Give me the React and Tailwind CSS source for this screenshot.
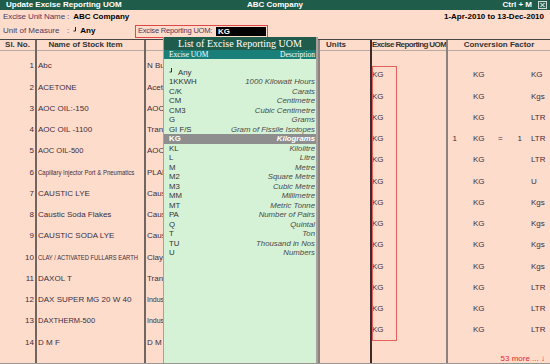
import React from "react";

const names = [
  ["1", "Abc", "N Bu"],
  ["2", "ACETONE", "Acet"],
  ["3", "AOC OIL:-150", "AOC"],
  ["4", "AOC OIL -1100", "Tran"],
  ["5", "AOC OIL-500", "AOC"],
  ["6", "Capillary Injector Port & Pneumatics", "PLAN"],
  ["7", "CAUSTIC LYE", "Caus"],
  ["8", "Caustic Soda Flakes", "Caus"],
  ["9", "CAUSTIC SODA LYE", "Caus"],
  ["10", "CLAY / ACTIVATED FULLARS EARTH", "Clay"],
  ["11", "DAXOL T", "Tran"],
  ["12", "DAX SUPER MG 20 W 40", "Indus"],
  ["13", "DAXTHERM-500", "Indus"],
  ["14", "D M F", "D M"],
];

const conv = [
  ["", "KG", "", "", "KG"],
  ["", "KG", "", "", "Kgs"],
  ["", "KG", "", "", "LTR"],
  ["1", "KG", "=", "1", "LTR"],
  ["", "KG", "", "", "LTR"],
  ["", "KG", "", "", "U"],
  ["", "KG", "", "", "Kgs"],
  ["", "KG", "", "", "Kgs"],
  ["", "KG", "", "", "Kgs"],
  ["", "KG", "", "", "Kgs"],
  ["", "KG", "", "", "LTR"],
  ["", "KG", "", "", "LTR"],
  ["", "KG", "", "", "LTR"],
];

const uoms = [
  ["1KKWH", "1000 Kilowatt Hours"],
  ["C/K", "Carats"],
  ["CM", "Centimetre"],
  ["CM3", "Cubic Centimetre"],
  ["G", "Grams"],
  ["GI F/S", "Gram of Fissile Isotopes"],
  ["KG", "Kilograms"],
  ["KL", "Kilolitre"],
  ["L", "Litre"],
  ["M", "Metre"],
  ["M2", "Square Metre"],
  ["M3", "Cubic Metre"],
  ["MM", "Millimetre"],
  ["MT", "Metric Tonne"],
  ["PA", "Number of Pairs"],
  ["Q", "Quintal"],
  ["T", "Ton"],
  ["TU", "Thousand in Nos"],
  ["U", "Numbers"],
];

function Hook({ color = "#222" }) {
  return (
    <svg width="4" height="5" viewBox="0 0 4 5" className="block">
      <path d="M2.5 0 V4 H0.5" stroke={color} strokeWidth="1" fill="none" />
    </svg>
  );
}

function NameText({ t }) {
  if (t === "Capillary Injector Port & Pneumatics")
    return <span className="inline-block origin-left scale-x-[0.86] text-[7px]">{t}</span>;
  if (t === "CLAY / ACTIVATED FULLARS EARTH")
    return <span className="inline-block origin-left scale-x-[0.83] text-[7px]">{t}</span>;
  if (t === "DAXTHERM-500" || t === "AOC OIL-500")
    return <span className="text-[7.5px]">{t}</span>;
  return t;
}

export default function App() {
  return (
    <div className="w-[550px] h-[364px] relative overflow-hidden bg-[#fedccb] font-['Liberation_Sans',Arial,sans-serif] text-[8px] text-[#3b2f3f] flex flex-col">
      {/* Title bar */}
      <div className="h-[10px] shrink-0 bg-[#1f5d4a] text-white font-bold text-[8px] leading-[10px] grid grid-cols-[1fr_auto_1fr] px-[6px]">
        <div className="whitespace-nowrap">Update Excise Reporting UOM</div>
        <div className="text-center whitespace-nowrap">ABC Company</div>
        <div className="flex justify-end items-center gap-[6px]">
          <span className="whitespace-nowrap">Ctrl + M</span>
          <svg width="9" height="8" viewBox="0 0 9 8" className="-mr-[3px]">
            <rect x="0.5" y="0.5" width="8" height="7" fill="#2d6a57" stroke="#cfd8d3" strokeWidth="1" />
            <path d="M2.5 2 L6.5 6 M6.5 2 L2.5 6" stroke="#ffffff" strokeWidth="1" />
          </svg>
        </div>
      </div>

      {/* Info lines */}
      <div className="h-[13px] shrink-0 flex items-center justify-between pl-[3px] pr-[6px] whitespace-nowrap">
        <div className="flex items-center">
          <span className="w-[64px] shrink-0 text-[#4d3a5e] tracking-[-0.1px]">Excise Unit Name</span>
          <span className="text-[#4d3a5e]">:</span>
          <span className="ml-[4px] font-bold text-black">ABC Company</span>
        </div>
        <div className="font-bold text-black">1-Apr-2010 to 13-Dec-2010</div>
      </div>
      <div className="h-[16px] shrink-0 flex items-center pl-[3px] whitespace-nowrap">
        <div className="w-[132px] shrink-0 flex items-center">
          <span className="w-[64px] shrink-0 text-[#4d3a5e]">Unit of Measure</span>
          <span className="text-[#4d3a5e]">:</span>
          <span className="ml-[4px] relative -top-[2px]"><Hook /></span>
          <span className="ml-[3px] font-bold text-black">Any</span>
        </div>
        <div className="w-[133px] shrink-0 h-[13px] border border-[#e04848] p-[1px] flex items-center">
          <span className="pl-[1px] flex-1 text-[#4d3a5e] text-[7.5px] tracking-[-0.2px] overflow-hidden">Excise Reporting UOM:</span>
          <span className="w-[50px] h-full bg-black text-white font-bold pl-[2px] leading-[9px]">KG</span>
        </div>
      </div>

      {/* Table */}
      <div className="flex-1 border-t border-[#4a4545] border-b border-b-[#9a9490] flex">
        {/* Sl No */}
        <div className="w-[35px] flex flex-col">
          <div className="h-[11px] leading-[10px] font-bold text-[#333] text-center border-b border-[#b8aaa2]">Sl. No.</div>
          <div className="pt-[4.4px]">
            {names.map((r) => (
              <div key={r[0]} className="h-[21.25px] leading-[21.25px] text-right pr-[1px]">{r[0]}</div>
            ))}
          </div>
        </div>
        <div className="w-[2px] bg-[#6f6662]" />
        {/* Name */}
        <div className="w-[107px] flex flex-col overflow-hidden">
          <div className="h-[11px] leading-[10px] font-bold text-[#333] text-center pr-[10px] border-b border-[#b8aaa2] whitespace-nowrap">Name of Stock Item</div>
          <div className="pt-[4.4px]">
            {names.map((r) => (
              <div key={r[0]} className="h-[21.25px] leading-[21.25px] pl-[1px] whitespace-nowrap">
                <NameText t={r[1]} />
              </div>
            ))}
          </div>
        </div>
        <div className="w-[2px] bg-[#6f6662]" />
        {/* Group (mostly hidden under the list) */}
        <div className="w-[172px] flex flex-col">
          <div className="h-[11px] border-b border-[#b8aaa2]" />
          <div className="pt-[4.4px]">
            {names.map((r) => (
              <div
                key={r[0]}
                className={
                  r[2] === "Indus"
                    ? "h-[21.25px] leading-[21.25px] pl-[1px] whitespace-nowrap text-[7px]"
                    : "h-[21.25px] leading-[21.25px] pl-[1px] whitespace-nowrap"
                }
              >
                {r[2]}
              </div>
            ))}
          </div>
        </div>
        <div className="w-[2px] bg-[#8a827e]" />
        {/* Units */}
        <div className="w-[50px] flex flex-col">
          <div className="h-[11px] leading-[10px] font-bold text-[#333] pl-[6px] border-b border-[#b8aaa2]">Units</div>
        </div>
        <div className="w-[2px] bg-[#3e2a2a]" />
        {/* Excise Reporting UOM */}
        <div className="w-[74px] flex flex-col">
          <div className="h-[11px] leading-[10px] font-bold text-[#333] text-center tracking-[-0.6px] whitespace-nowrap border-b border-[#b8aaa2]">Excise Reporting UOM</div>
          <div className="pt-[13.4px]">
            {conv.map((r, i) => (
              <div key={i} className="h-[21.25px] leading-[21.25px]">KG</div>
            ))}
          </div>
        </div>
        <div className="w-[2px] bg-[#8a827e]" />
        {/* Conversion factor */}
        <div className="flex-1 flex flex-col">
          <div className="h-[11px] leading-[10px] font-bold text-[#333] text-center border-b border-[#b8aaa2] whitespace-nowrap">Conversion Factor</div>
          <div className="pt-[13.4px]">
            {conv.map((r, i) => (
              <div key={i} className="h-[21.25px] leading-[21.25px] flex whitespace-nowrap">
                <span className="w-[9px] text-right">{r[0]}</span>
                <span className="ml-[16px] w-[25px]">{r[1]}</span>
                <span className="w-[8px]">{r[2]}</span>
                <span className="w-[16px] text-right">{r[3]}</span>
                <span className="ml-[9px]">{r[4]}</span>
              </div>
            ))}
          </div>
          <div className="flex-1 flex items-end justify-end pr-[5px]">
            <span className="text-[#e8262a] leading-[9px] whitespace-nowrap">53 more ... ↓</span>
          </div>
        </div>
      </div>

      {/* Red selection box over the Excise Reporting UOM column */}
      <div className="absolute left-[372px] top-[66px] w-[25px] h-[275px] border border-[#e8605c] pointer-events-none" />

      {/* Popup list */}
      <div className="absolute left-[163px] top-[37px] w-[155px] h-[326px] bg-[#d5f2d6] border-l border-[#9aa89a] border-r-[2px] border-r-[#a8a29e] flex flex-col">
        <div className="h-[13px] bg-[#1f5c4c] text-white text-center font-['Liberation_Serif','Times_New_Roman',serif] text-[10px] leading-[13px] whitespace-nowrap">
          List of Excise Reporting UOM
        </div>
        <div className="h-[9px] bg-[#1a7f79] text-white flex justify-between items-center pl-[5px] pr-[1px] font-['Liberation_Serif','Times_New_Roman',serif] text-[7.5px] leading-[9px]">
          <span>Excise UOM</span>
          <span>Description</span>
        </div>
        <div className="pt-[8.5px] text-[#333] text-[7.8px]">
          <div className="h-[9.5px] leading-[9.5px] flex items-center pl-[5px]">
            <span className="relative -top-[2px]"><Hook color="#333" /></span>
            <span className="ml-[5px]">Any</span>
          </div>
          {uoms.map(([c, d]) => {
            const sel = c === "KG";
            return (
              <div
                key={c}
                className={
                  sel
                    ? "h-[9.5px] leading-[9.5px] flex justify-between pl-[5px] pr-[1px] bg-[#8e8e8e] text-white font-bold whitespace-nowrap"
                    : "h-[9.5px] leading-[9.5px] flex justify-between pl-[5px] pr-[1px] whitespace-nowrap"
                }
              >
                <span>{c}</span>
                <span className={sel ? "italic" : "italic text-[#4a4a4a]"}>{d}</span>
              </div>
            );
          })}
        </div>
      </div>
    </div>
  );
}
